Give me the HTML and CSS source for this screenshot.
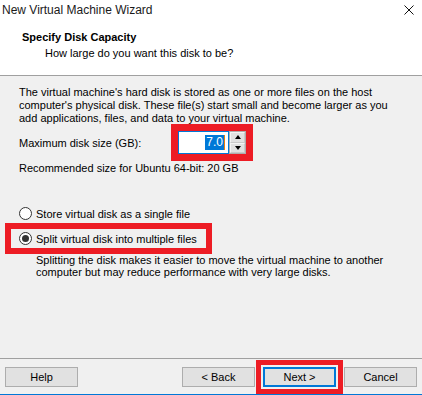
FILE: index.html
```html
<!DOCTYPE html>
<html lang="en">
<head>
    <meta charset="UTF-8">
    <title>New Virtual Machine Wizard</title>
    <link rel="stylesheet" href="styles.css">
</head>
<body>
    <div class="window">
        <div class="titlebar">
            <span class="title">New Virtual Machine Wizard</span>
            <svg class="close" width="10" height="10" viewBox="0 0 10 10">
                <path d="M0.5 0.5 L9.5 9.5 M9.5 0.5 L0.5 9.5" stroke="#111" stroke-width="1"/>
            </svg>
        </div>

        <div class="header">
            <h1>Specify Disk Capacity</h1>
            <p class="subtitle">How large do you want this disk to be?</p>
        </div>

        <div class="content">
            <p class="intro">The virtual machine's hard disk is stored as one or more files on the host computer's physical disk. These file(s) start small and become larger as you add applications, files, and data to your virtual machine.</p>

            <div class="size-row">
                <span class="label">Maximum disk size (GB):</span>
                <div class="spinbox marked">
                    <div class="spin-input"><span class="sel">7.0</span><span class="caret"></span></div>
                    <div class="spin-buttons">
                        <div class="spin-btn"><span class="arrow up"></span></div>
                        <div class="spin-btn"><span class="arrow down"></span></div>
                    </div>
                </div>
            </div>

            <p class="recommended">Recommended size for Ubuntu 64-bit: 20 GB</p>

            <div class="options">
                <label class="radio">
                    <span class="dot"></span>
                    Store virtual disk as a single file
                </label>
                <label class="radio checked marked">
                    <span class="dot"></span>
                    Split virtual disk into multiple files
                </label>
                <p class="hint">Splitting the disk makes it easier to move the virtual machine to another computer but may reduce performance with very large disks.</p>
            </div>
        </div>

        <div class="footer">
            <button class="btn">Help</button>
            <div class="nav">
                <button class="btn">&lt; Back</button>
                <button class="btn btn-default marked-btn">Next &gt;</button>
                <button class="btn">Cancel</button>
            </div>
        </div>
    </div>
</body>
</html>
```

FILE: styles.css
```css
:root {
    --face: #f0f0f0;
    --text: #000000;
    --accent: #0078d7;
    --btn-face: #e1e1e1;
    --btn-border: #adadad;
    --mark: #ed1c24;
}

* {
    margin: 0;
    padding: 0;
    box-sizing: border-box;
}

body {
    font-family: 'Liberation Sans', Arial, sans-serif;
    font-size: 11px;
    color: var(--text);
    background-color: var(--face);
}

.window {
    width: 422px;
    height: 395px;
    display: flex;
    flex-direction: column;
    border-bottom: 1px solid var(--accent);
}

.titlebar {
    height: 20px;
    background-color: #ffffff;
    display: flex;
    align-items: center;
    justify-content: space-between;
    padding: 0 8px 0 2px;
}

.title {
    font-size: 12px;
    color: #1a1a1a;
}

.header {
    height: 56px;
    background-color: #ffffff;
    border-bottom: 1px solid #a0a0a0;
    padding: 10px 0 0 22px;
}

h1 {
    font-size: 11px;
    font-weight: bold;
    line-height: 14px;
}

.subtitle {
    padding-left: 23px;
    margin-top: 2px;
    line-height: 14px;
}

.content {
    flex: 1;
    padding: 10px 19px 0 19px;
}

.intro {
    line-height: 13px;
}

.size-row {
    display: flex;
    align-items: center;
    margin-top: 6px;
}

.label {
    width: 159px;
}

.spinbox {
    display: flex;
    height: 23px;
}

.marked {
    outline: 7px solid var(--mark);
}

.spin-input {
    width: 51px;
    border: 1px solid var(--accent);
    background-color: #ffffff;
    display: flex;
    align-items: center;
    justify-content: flex-end;
    padding-right: 3px;
    font-size: 12px;
}

.sel {
    background-color: var(--accent);
    color: #ffffff;
    line-height: 15px;
    padding: 0 1px;
}

.caret {
    width: 1px;
    height: 15px;
    background-color: #e87d0d;
}

.spin-buttons {
    width: 17px;
    display: flex;
    flex-direction: column;
    border: 1px solid var(--btn-border);
    background-color: var(--btn-face);
}

.spin-btn {
    flex: 1;
    display: flex;
    align-items: center;
    justify-content: center;
    border: 1px solid #ffffff;
    border-color: #f4f4f4 #c8c8c8 #c8c8c8 #f4f4f4;
}

.arrow {
    width: 0;
    height: 0;
    border-left: 3px solid transparent;
    border-right: 3px solid transparent;
}

.arrow.up {
    border-bottom: 4px solid #000000;
}

.arrow.down {
    border-top: 4px solid #000000;
}

.recommended {
    margin-top: 8px;
    line-height: 13px;
}

.options {
    margin-top: 29px;
}

.radio {
    display: flex;
    align-items: center;
    gap: 4px;
    height: 19px;
    width: 195px;
    margin-left: -8px;
    padding-left: 8px;
    margin-bottom: 6px;
}

.radio.marked {
    outline-width: 6px;
}

.dot {
    width: 13px;
    height: 13px;
    border: 1px solid #333333;
    border-radius: 50%;
    background-color: #ffffff;
    display: flex;
    align-items: center;
    justify-content: center;
}

.checked .dot::after {
    content: '';
    width: 7px;
    height: 7px;
    border-radius: 50%;
    background-color: #333333;
}

.hint {
    padding-left: 17px;
    margin-top: 1px;
    line-height: 12px;
}

.footer {
    height: 36px;
    border-top: 1px solid #a0a0a0;
    display: flex;
    justify-content: space-between;
    padding: 8px 5px 0 5px;
}

.nav {
    display: flex;
    gap: 8px;
}

.btn {
    width: 73px;
    height: 20px;
    font-family: inherit;
    font-size: 11px;
    color: var(--text);
    background-color: var(--btn-face);
    border: 1px solid var(--btn-border);
}

.btn-default {
    border: 2px solid var(--accent);
}

.marked-btn {
    outline: 5px solid var(--mark);
    outline-offset: 2px;
}
```
